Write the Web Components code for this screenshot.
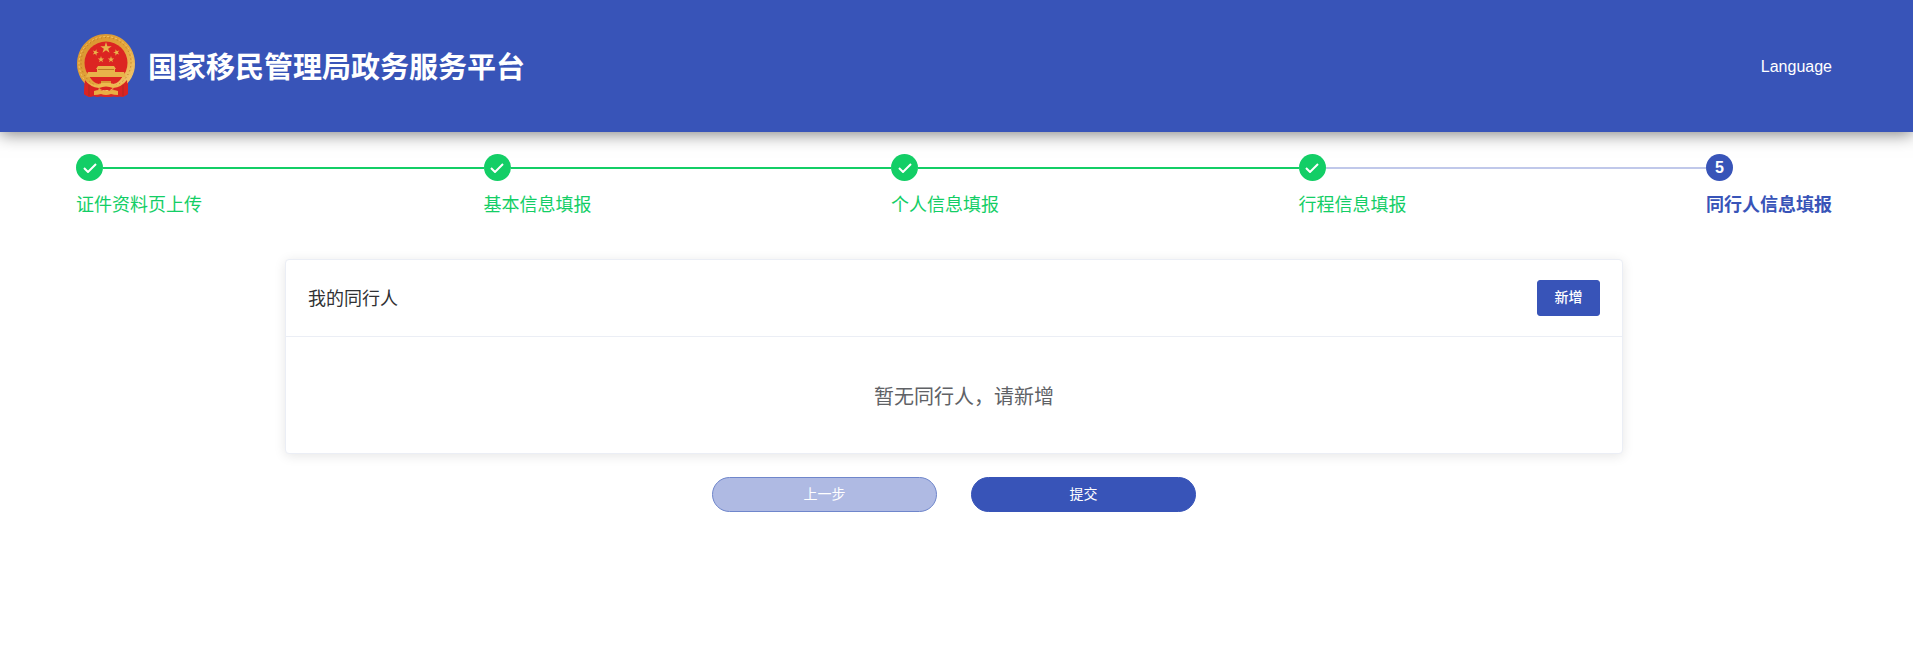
<!DOCTYPE html>
<html lang="zh-CN">
<head>
<meta charset="UTF-8">
<meta name="viewport" content="width=device-width, initial-scale=1.0">
<title>国家移民管理局政务服务平台</title>
<style>
    *{box-sizing:border-box;}
    body{margin:0;background:#fff;color:#303133;font-family:"Liberation Sans","Noto Sans CJK SC",sans-serif;}
    main{padding:22px 81px 0 76px;}
    .content{width:76.2%;margin:0 auto;}
</style>
</head>
<body>
<site-header>国家移民管理局政务服务平台</site-header>
<main>
    <step-bar>
        <step-item state="done">证件资料页上传</step-item>
        <step-item state="done">基本信息填报</step-item>
        <step-item state="done">个人信息填报</step-item>
        <step-item state="done" next="wait">行程信息填报</step-item>
        <step-item state="active" num="5">同行人信息填报</step-item>
    </step-bar>
    <div class="content">
        <list-card>
            <span slot="title">我的同行人</span>
            <ui-button slot="action" type="small">新增</ui-button>
            暂无同行人，请新增
        </list-card>
        <form-actions>
            <ui-button type="plain">上一步</ui-button>
            <ui-button type="round">提交</ui-button>
        </form-actions>
    </div>
</main>
<script>
function emblemSrc(){
    return `
<svg viewBox="0 0 58 64" width="58" height="64" aria-hidden="true">
    <defs>
        <linearGradient id="gold" x1="0" y1="0" x2="1" y2="1">
            <stop offset="0" stop-color="#d8922c"/>
            <stop offset=".55" stop-color="#e2a53c"/>
            <stop offset="1" stop-color="#f6cf7c"/>
        </linearGradient>
        <path id="star" d="M0-1 .23-.31.95-.31.36.12.59.81 0 .38-.59.81-.36.12-.95-.31-.23-.31Z"/>
    </defs>
    <path d="M8 43 7 60q4 4 9 2l4 1q4-1 8 0l5 0q4-1 7 0l5-1q6 0 6-4l0-15Z" fill="#da2724"/>
    <path d="M29 0C45 0 58 13 58 30 58 40 53 48 46 53L29 57 12 53C5 48 0 40 0 30 0 13 13 0 29 0Z" fill="url(#gold)"/>
    <ellipse cx="29" cy="28.500" rx="25" ry="25" fill="none" stroke="#b87420" stroke-width="1" stroke-dasharray="1 3"/>
    <circle cx="29" cy="29.500" r="27" fill="none" stroke="#f4c767" stroke-width="1" stroke-dasharray="2 2"/>
    <circle cx="29" cy="29" r="21.500" fill="#dc2522"/>
    <g fill="#e8b44a">
        <use href="#star" transform="translate(29 14) scale(6)"/>
        <use href="#star" transform="translate(18.500 18.500) rotate(18) scale(3.400)"/>
        <use href="#star" transform="translate(39.500 18.500) rotate(-18) scale(3.400)"/>
        <use href="#star" transform="translate(24 25.500) scale(3.400)"/>
        <use href="#star" transform="translate(34 25.500) scale(3.400)"/>
        <path d="M21 32h16l2 3h-1v3h9l2 5H9l2-5h9v-3h-1Z"/>
    </g>
    <path d="M21 35.500h16" stroke="#bd7a22"/>
    <path d="M13 43h32q-3 6-9 7-3-4-7-4t-7 4q-6-1-9-7Z" fill="#dc2522"/>
    <path d="M8 46q6 6 15 5l2-4h8l2 4q9 1 15-5l-2 5q-5 5-12 4l-7-2-7 2q-7 1-12-4Z" fill="#edb94d"/>
    <path d="M8 46q5 7 14 8l-4 8-6 1-5-3ZM50 46q-5 7-14 8l4 8 6 1 5-3Z" fill="#d92422"/>
    <path d="M22 54q7-3 14 0l-3 2h-8Z" fill="#d92422"/>
    <path d="M17 57q6-2 9 0h6q3-2 9 0v4q-4 0-7-1-5 2-10 0-3 1-7 1Z" fill="#e8ae43"/>
    <path d="M12 51v11M46 51v11" stroke="#ad2a20"/>
    <path d="M24 48h10" stroke="#d99835" stroke-width="2"/>
</svg>
    `;
}

class SiteHeader extends HTMLElement {
    constructor() {
        super();
        this.attachShadow({ mode: 'open' });
    }
    connectedCallback() {
        this.shadowRoot.innerHTML = `
<style>
    *{margin:0;padding:0;box-sizing:border-box;}
    :host{display:block;background:#3854b8;box-shadow:0 2px 16px rgba(0,0,0,.5);}
    header{display:flex;align-items:center;justify-content:space-between;padding:34px 81px 34px 77px;}
    .brand{display:flex;align-items:center;gap:13px;color:#fff;}
    svg{display:block;}
    h1{padding-top:4px;font-size:29px;line-height:40px;font-weight:bold;}
    a{padding-top:2px;color:#fff;font-size:16px;line-height:24px;text-decoration:none;}
</style>
<header>
    <div class="brand">${emblemSrc()}<h1><slot></slot></h1></div>
    <a href="#">Language</a>
</header>
        `;
    }
}

class StepBar extends HTMLElement {
    constructor() {
        super();
        this.attachShadow({ mode: 'open' });
    }
    connectedCallback() {
        this.shadowRoot.innerHTML = `
<style>
    :host{display:flex;}
    ::slotted(*){flex:1;}
    ::slotted(:last-child){flex:none;}
</style>
<slot></slot>
        `;
    }
}

class StepItem extends HTMLElement {
    constructor() {
        super();
        this.attachShadow({ mode: 'open' });
    }
    connectedCallback() {
        const num = this.getAttribute('num');
        const check = `<svg viewBox="0 0 14 10" width="14" height="10" aria-hidden="true"><path d="M1 5l4 4 8-8" fill="none" stroke="#fff" stroke-width="2"/></svg>`;
        this.shadowRoot.innerHTML = `
<style>
    *{box-sizing:border-box;}
    :host{display:block;--main:#13ce66;color:var(--main);}
    :host([state="active"]){--main:#3854b8;font-weight:bold;}
    .head{display:flex;align-items:center;}
    .icon{display:flex;align-items:center;justify-content:center;width:27px;height:27px;border-radius:50%;background:var(--main);color:#fff;font-size:16px;line-height:27px;}
    .line{flex:1;height:2px;background:var(--main);}
    :host([next="wait"]) .line{background:#c0c8ea;}
    :host([state="active"]) .line{display:none;}
    .title{margin-top:11px;font-size:18px;line-height:26px;white-space:nowrap;}
</style>
<div class="head"><span class="icon">${num || check}</span><span class="line"></span></div>
<div class="title"><slot></slot></div>
        `;
    }
}

class ListCard extends HTMLElement {
    constructor() {
        super();
        this.attachShadow({ mode: 'open' });
    }
    connectedCallback() {
        this.shadowRoot.innerHTML = `
<style>
    *{box-sizing:border-box;}
    :host{display:block;margin-top:41px;background:#fff;border:1px solid #ebeef5;border-radius:4px;box-shadow:0 2px 12px rgba(0,0,0,.1);}
    .head{display:flex;align-items:center;justify-content:space-between;padding:20px 22px;border-bottom:1px solid #ebeef5;font-size:18px;line-height:26px;}
    ::slotted([slot="title"]){padding-top:2px;}
    .body{padding:42px 20px 38px 40px;text-align:center;color:#606266;font-size:20px;line-height:36px;}
</style>
<div class="head"><slot name="title"></slot><slot name="action"></slot></div>
<div class="body"><slot></slot></div>
        `;
    }
}

class FormActions extends HTMLElement {
    constructor() {
        super();
        this.attachShadow({ mode: 'open' });
    }
    connectedCallback() {
        this.shadowRoot.innerHTML = `
<style>
    :host{display:flex;justify-content:center;gap:34px;margin-top:23px;}
</style>
<slot></slot>
        `;
    }
}

class UiButton extends HTMLElement {
    constructor() {
        super();
        this.attachShadow({ mode: 'open' });
    }
    connectedCallback() {
        this.shadowRoot.innerHTML = `
<style>
    :host{display:block;}
    button{display:block;box-sizing:border-box;width:225px;height:35px;margin:0;padding:0 0 2px;border:1px solid #3854b8;border-radius:18px;background:#3854b8;color:#fff;font-family:inherit;font-size:14px;line-height:20px;cursor:pointer;}
    :host([type="small"]) button{width:63px;height:36px;border-radius:3px;font-weight:500;}
    :host([type="plain"]) button{background:#afbae3;border-color:#6f86cb;}
</style>
<button type="button"><slot></slot></button>
        `;
    }
}

customElements.define('site-header', SiteHeader);
customElements.define('step-bar', StepBar);
customElements.define('step-item', StepItem);
customElements.define('list-card', ListCard);
customElements.define('form-actions', FormActions);
customElements.define('ui-button', UiButton);
</script>
</body>
</html>
